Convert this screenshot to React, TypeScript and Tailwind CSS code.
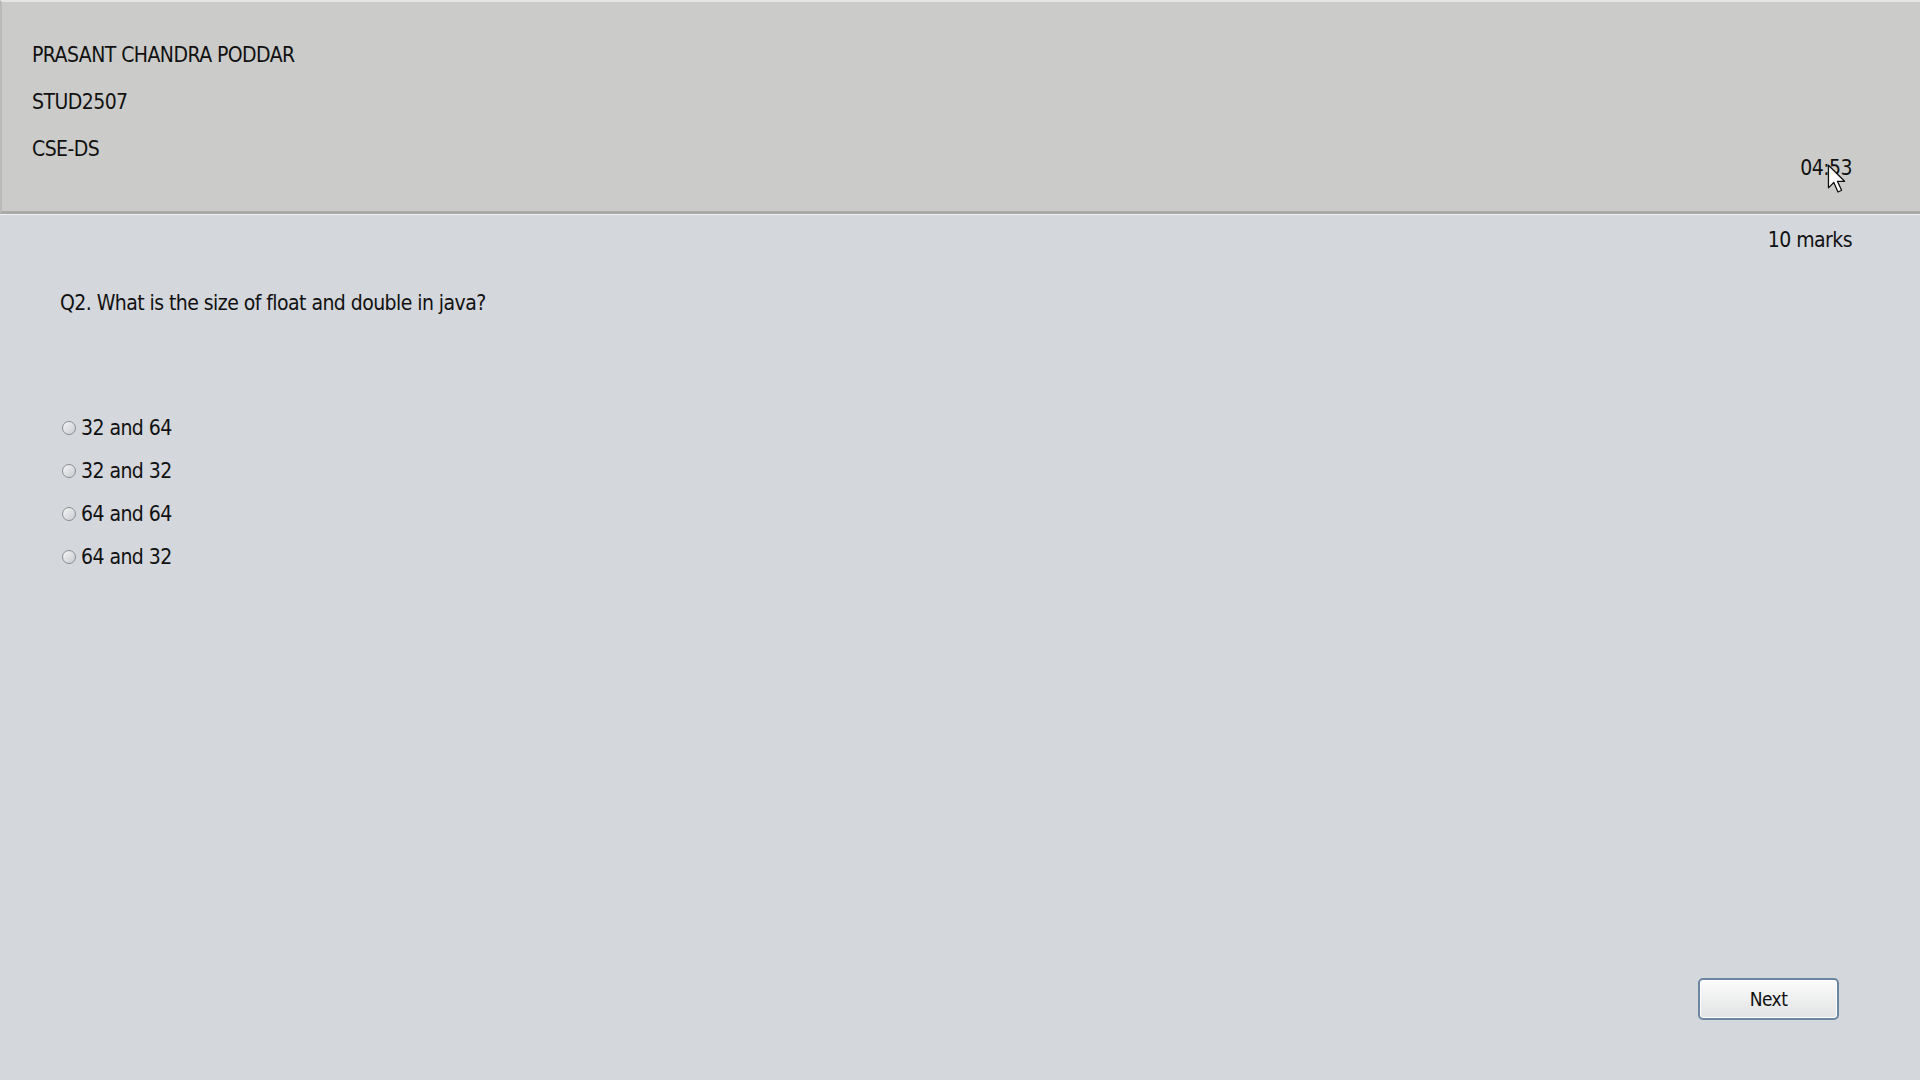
import { useState } from "react";

const options = ["32 and 64", "32 and 32", "64 and 64", "64 and 32"];

function Cursor() {
  return (
    <svg
      className="absolute left-[1827px] top-[164px]"
      width="22"
      height="31"
      viewBox="0 0 18 26"
    >
      <path
        d="M1 1 L1 20 L5.5 15.5 L9 23.5 L12 22 L8.5 14.5 L14.5 14.5 Z"
        fill="#ffffff"
        stroke="#111111"
        strokeWidth="1.1"
        strokeLinejoin="round"
      />
    </svg>
  );
}

export default function App() {
  const [picked, setPicked] = useState<number | null>(null);

  return (
    <div
      className="relative w-[1920px] h-[1080px] overflow-hidden bg-[#d4d7dc] text-[#111111] tracking-[-0.55px]"
      style={{ fontFamily: '"DejaVu Sans Condensed", "DejaVu Sans", sans-serif' }}
    >
      {/* En-tête étudiant */}
      <div className="h-[214px] border-t-2 border-t-[#e4e4e2] border-l-2 border-l-[#b9b9b7] border-b-[3px] border-b-[#a9a9a8] bg-[#cbcbc9] shadow-[0_1px_0_#eef0f2] flex justify-between">
        <div className="pt-[41px] pl-[30px] flex flex-col gap-[23px] text-[21px] leading-[24px]">
          <p>PRASANT CHANDRA PODDAR</p>
          <p>STUD2507</p>
          <p>CSE-DS</p>
        </div>
        <div className="pt-[154px] pr-[68px] text-[21px] leading-[24px]">04:53</div>
      </div>

      {/* Question */}
      <div className="flex justify-end pr-[68px] pt-[14px] text-[21px] leading-[24px]">10 marks</div>

      <p className="pl-[60px] pt-[39px] text-[21px] leading-[24px]">
        Q2. What is the size of float and double in java?
      </p>

      <div className="pl-[62px] pt-[101px] flex flex-col gap-[19px]">
        {options.map((opt, i) => (
          <label
            key={opt}
            className="flex items-center gap-[5px] text-[21px] leading-[24px] cursor-default"
            onClick={() => setPicked(i)}
          >
            <span className="w-[14px] h-[14px] rounded-full border border-[#8a8d91] bg-gradient-to-br from-[#f4f5f6] to-[#c9ccd0] flex items-center justify-center">
              {picked === i && <span className="w-[6px] h-[6px] rounded-full bg-[#2a2a2a]" />}
            </span>
            <span>{opt}</span>
          </label>
        ))}
      </div>

      <button className="absolute left-[1698px] top-[978px] w-[141px] h-[42px] rounded-[5px] border-2 border-[#6c86a0] bg-gradient-to-b from-[#fbfbfb] to-[#e2e3e4] shadow-[inset_0_0_0_1px_#ffffff] text-[19px] leading-none text-[#111111]">
        Next
      </button>

      <Cursor />
    </div>
  );
}
